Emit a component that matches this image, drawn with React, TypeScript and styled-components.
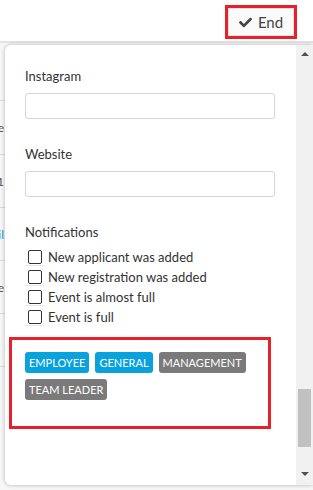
import React from "react";
import styled, { createGlobalStyle } from "styled-components";
import { FaCheck } from "react-icons/fa";

const GlobalStyle = createGlobalStyle`
  body {
    margin: 0;
    font-family: Lato, "Open Sans", sans-serif;
    color: #333;
    background: #fff;
  }
`;

const Page = styled.div`
  position: relative;
  width: 313px;
  height: 490px;
  overflow: hidden;
  background: #f7f7f7;
`;

const TopBar = styled.div`
  display: flex;
  justify-content: flex-end;
  align-items: flex-start;
  height: 43px;
  padding: 5px 16px 0 0;
  box-sizing: border-box;
  background: #fff;
  border-bottom: 2px solid #e3e3e3;
`;

const Highlight = styled.div`
  border: 3px solid #e8202a;
`;

const EndButton = styled.button`
  display: flex;
  align-items: center;
  justify-content: center;
  gap: 6px;
  width: 66px;
  height: 28px;
  padding: 0;
  background: #fafafa;
  border: 1px solid #e2e2e2;
  border-radius: 2px;
  font-family: Lato, sans-serif;
  font-size: 15px;
  color: #444;
`;

const BackList = styled.div`
  display: flex;
  flex-direction: column;
`;

const BackRow = styled.div<{ $h: number }>`
  display: flex;
  align-items: center;
  height: ${(p) => p.$h}px;
  border-bottom: 1px solid #dcdcdc;
  box-sizing: border-box;
`;

const BackCell = styled.div<{ $blue?: boolean }>`
  display: flex;
  justify-content: flex-end;
  width: 4px;
  white-space: nowrap;
  overflow: hidden;
  font-size: 12px;
  color: ${(p) => (p.$blue ? "#2a8fd6" : "#555")};
`;

const Modal = styled.div`
  position: absolute;
  top: 45px;
  left: 5px;
  width: 308px;
  height: 440px;
  display: flex;
  background: #fff;
  border-radius: 6px 0 0 6px;
  box-shadow: 0 0 4px rgba(0, 0, 0, 0.28);
  overflow: hidden;
`;

const Body = styled.div`
  flex: 1;
  padding: 22px 16px 0 20px;
`;

const Field = styled.div`
  margin-bottom: 26px;
`;

const Label = styled.div`
  font-size: 13px;
  line-height: 18px;
  color: #333;
  margin-bottom: 8px;
`;

const NotifLabel = styled(Label)`
  margin-bottom: 6px;
`;

const TextInput = styled.input`
  display: block;
  width: 250px;
  height: 26px;
  box-sizing: border-box;
  border: 1px solid #d6d6d6;
  border-radius: 3px;
  background: #fff;
`;

const CheckRow = styled.label`
  display: flex;
  align-items: center;
  gap: 4px;
  height: 20px;
  font-size: 13px;
  color: #333;
`;

const CheckWrap = styled.span`
  display: flex;
  align-items: center;
  width: 19px;
  height: 18px;
  padding-left: 3px;
  box-sizing: border-box;
  border-bottom: 1px solid #e6e6e6;
`;

const CheckBox = styled.span`
  width: 14px;
  height: 14px;
  box-sizing: border-box;
  border: 1.5px solid #333;
  border-radius: 2px;
`;

const TagBox = styled.div`
  width: 262px;
  box-sizing: border-box;
  margin: 10px 0 0 -16px;
  padding: 12px 10px 26px 13px;
  border: 3px solid #e8202a;
  display: flex;
  flex-wrap: wrap;
  gap: 6px;
`;

const Tag = styled.span<{ $active?: boolean }>`
  display: inline-block;
  height: 21px;
  line-height: 21px;
  padding: 0 4px;
  border-radius: 3px;
  font-size: 11px;
  color: #fff;
  background: ${(p) => (p.$active ? "#0aa2dc" : "#7a7a7a")};
`;

const ScrollTrack = styled.div`
  width: 17px;
  display: flex;
  flex-direction: column;
  align-items: center;
  background: #f1f1f1;
`;

const Arrow = styled.div<{ $down?: boolean }>`
  width: 0;
  height: 0;
  margin: ${(p) => (p.$down ? "0 0 9px" : "7px 0 0")};
  border-left: 4px solid transparent;
  border-right: 4px solid transparent;
  ${(p) =>
    p.$down ? "border-top: 4px solid #505050;" : "border-bottom: 4px solid #505050;"}
`;

const Spacer = styled.div`
  flex: 1;
`;

const Thumb = styled.div`
  width: 13px;
  height: 58px;
  margin-bottom: 25px;
  background: #c1c1c1;
`;

const backRows = [
  { h: 58, text: "" },
  { h: 54, text: "Name" },
  { h: 53, text: "11" },
  { h: 53, text: "mail", blue: true },
  { h: 53, text: "Lee" },
  { h: 53, text: "" },
];

const notifications = [
  "New applicant was added",
  "New registration was added",
  "Event is almost full",
  "Event is full",
];

const tags = [
  { name: "EMPLOYEE", active: true },
  { name: "GENERAL", active: true },
  { name: "MANAGEMENT", active: false },
  { name: "TEAM LEADER", active: false },
];

const App: React.FC = () => {
  return (
    <Page>
      <GlobalStyle />
      <TopBar>
        <Highlight>
          <EndButton>
            <FaCheck size={13} />
            End
          </EndButton>
        </Highlight>
      </TopBar>

      <BackList>
        {backRows.map((row, i) => (
          <BackRow key={i} $h={row.h}>
            <BackCell $blue={row.blue}>{row.text}</BackCell>
          </BackRow>
        ))}
      </BackList>

      <Modal>
        <Body>
          <Field>
            <Label>Instagram</Label>
            <TextInput />
          </Field>
          <Field>
            <Label>Website</Label>
            <TextInput />
          </Field>
          <NotifLabel>Notifications</NotifLabel>
          {notifications.map((n) => (
            <CheckRow key={n}>
              <CheckWrap>
                <CheckBox />
              </CheckWrap>
              {n}
            </CheckRow>
          ))}
          <TagBox>
            {tags.map((t) => (
              <Tag key={t.name} $active={t.active}>
                {t.name}
              </Tag>
            ))}
          </TagBox>
        </Body>
        <ScrollTrack>
          <Arrow />
          <Spacer />
          <Thumb />
          <Arrow $down />
        </ScrollTrack>
      </Modal>
    </Page>
  );
};

export default App;
